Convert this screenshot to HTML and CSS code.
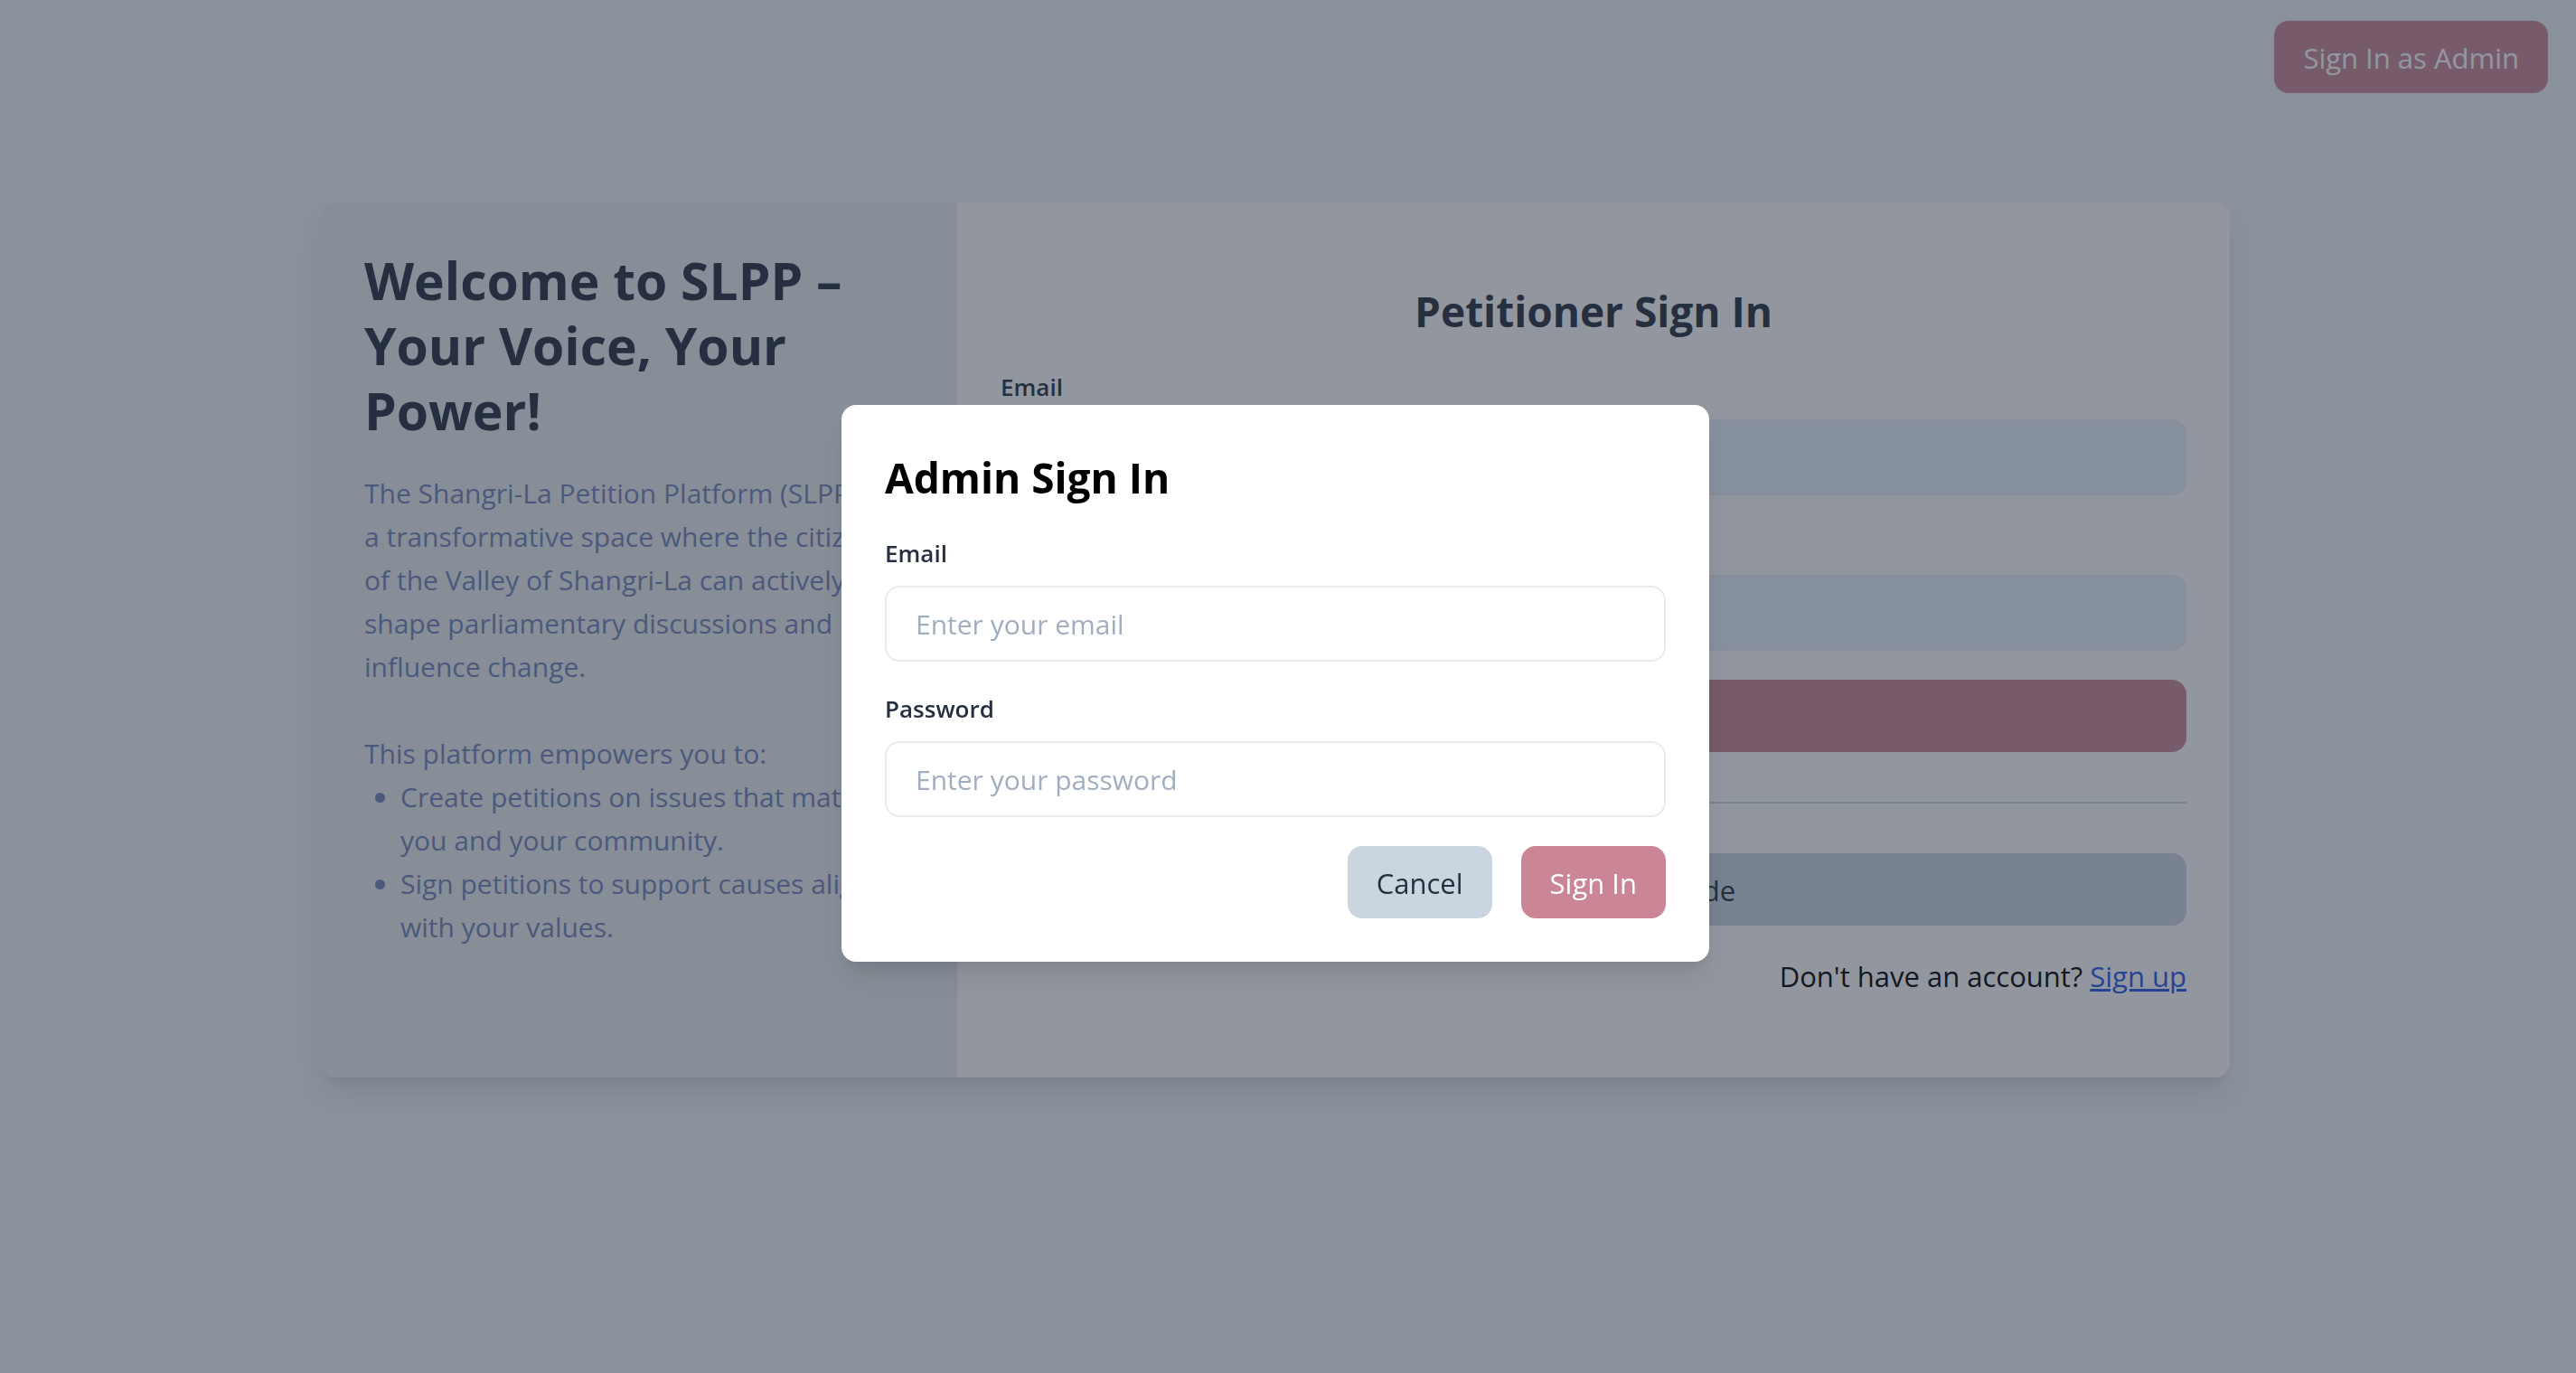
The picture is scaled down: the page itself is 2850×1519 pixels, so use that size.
FILE: index.html
```html
<!DOCTYPE html>
<html lang="en">
<head>
  <meta charset="utf-8">
  <meta name="viewport" content="width=device-width, initial-scale=1">
  <title>SLPP – Sign In</title>
  <link rel="stylesheet" href="styles.css">
</head>
<body>
  <header class="topbar">
    <button class="btn btn-primary" type="button">Sign In as Admin</button>
  </header>

  <main class="page">
    <div class="card">
      <section class="intro">
        <h1 class="intro-title">Welcome to SLPP – Your Voice, Your Power!</h1>
        <p class="intro-text">The Shangri-La Petition Platform (SLPP) is a transformative space where the citizens of the Valley of Shangri-La can actively shape parliamentary discussions and influence change.</p>
        <p class="intro-lead">This platform empowers you to:</p>
        <ul class="intro-list">
          <li>Create petitions on issues that matter to you and your community.</li>
          <li>Sign petitions to support causes aligned with your values.</li>
        </ul>
      </section>

      <section class="signin">
        <h2 class="form-title signin-title">Petitioner Sign In</h2>
        <form class="form">
          <div class="field">
            <label class="label" for="email">Email</label>
            <input class="input input-filled" id="email" type="email">
          </div>
          <div class="field">
            <label class="label" for="password">Password</label>
            <input class="input input-filled" id="password" type="password">
          </div>
          <button class="btn btn-primary" type="submit">Sign In</button>
        </form>
        <hr class="divider">
        <button class="btn btn-secondary" type="button">Sign Up with QR Code</button>
        <p class="signup">Don't have an account? <a class="link" href="#signup">Sign up</a></p>
      </section>
    </div>
  </main>

  <div class="overlay">
    <div class="modal" role="dialog" aria-modal="true" aria-labelledby="admin-title">
      <h2 class="form-title" id="admin-title">Admin Sign In</h2>
      <form class="form">
        <div class="field">
          <label class="label" for="admin-email">Email</label>
          <input class="input" id="admin-email" type="email" placeholder="Enter your email">
        </div>
        <div class="field">
          <label class="label" for="admin-password">Password</label>
          <input class="input" id="admin-password" type="password" placeholder="Enter your password">
        </div>
        <div class="actions">
          <button class="btn btn-secondary" type="button">Cancel</button>
          <button class="btn btn-primary" type="submit">Sign In</button>
        </div>
      </form>
    </div>
  </div>
</body>
</html>
```
FILE: styles.css
```css
*,
*::before,
*::after {
  box-sizing: border-box;
}

body,
h1,
h2,
p,
ul {
  margin: 0;
}

body {
  min-height: 100vh;
  background: #edf2f7;
  color: #000;
  font-family: "Segoe UI", "Open Sans", "Noto Sans", sans-serif;
  font-size: 30px;
  line-height: 48px;
}

button,
input {
  font: inherit;
}

.topbar {
  display: flex;
  justify-content: flex-end;
  padding: 23px 31px 0;
}

.page {
  display: flex;
  justify-content: center;
  padding: 121px 28px 48px 0;
}

.card {
  display: grid;
  grid-template-columns: 1fr 2fr;
  width: 100%;
  max-width: 2112px;
  border-radius: 16px;
  background: #fff;
  box-shadow: 0 20px 30px -6px rgba(0, 0, 0, 0.1), 0 8px 12px -4px rgba(0, 0, 0, 0.05);
  overflow: hidden;
}

.intro {
  padding: 50px 48px 46px;
  background: #e9ecef;
  color: #7083b8;
}

.intro-title {
  margin-bottom: 32px;
  color: #252f3f;
  font-size: 57px;
  font-weight: 700;
  line-height: 72px;
}

.intro-text {
  margin-bottom: 48px;
  padding-right: 16px;
}

.intro-list {
  padding-left: 40px;
}

.signin {
  display: flex;
  flex-direction: column;
  padding: 88px 48px;
}

.form-title {
  margin-bottom: 32px;
  font-size: 46px;
  font-weight: 700;
  line-height: 64px;
}

.signin-title {
  color: #252f3f;
  text-align: center;
}

.form {
  display: flex;
  flex-direction: column;
  gap: 32px;
}

.field {
  display: flex;
  flex-direction: column;
  gap: 16px;
}

.label {
  color: #252f3f;
  font-size: 26px;
  font-weight: 600;
  line-height: 40px;
}

.input {
  width: 100%;
  height: 84px;
  padding: 16px 32px;
  border: 2px solid #e9ecef;
  border-radius: 16px;
  background: #fff;
  color: #252f3f;
}

.input::placeholder {
  color: #a0aec0;
  opacity: 1;
}

.input-filled {
  background: #e8f0fe;
}

.btn {
  padding: 17px 32px 15px;
  border: 0;
  border-radius: 16px;
  font-size: 31px;
  cursor: pointer;
}

.btn-primary {
  background: #cb8696;
  color: #fff;
}

.btn-secondary {
  background: #cbd5e0;
  color: #252f3f;
}

.divider {
  width: 100%;
  margin: 55px 0;
  border: 0;
  border-top: 2px solid #cbd5e0;
}

.signup {
  margin-top: 32px;
  font-size: 31px;
  text-align: right;
}

.link {
  color: #2455eb;
  text-decoration-thickness: 3px;
}

.overlay {
  position: fixed;
  inset: 0;
  display: flex;
  align-items: center;
  justify-content: center;
  padding: 0 28px 7px 0;
  background: rgba(37, 47, 63, 0.5);
}

.modal {
  width: 100%;
  max-width: 960px;
  padding: 48px;
  border-radius: 16px;
  background: #fff;
  box-shadow: 0 20px 30px -6px rgba(0, 0, 0, 0.1), 0 8px 12px -4px rgba(0, 0, 0, 0.05);
}

.actions {
  display: flex;
  justify-content: flex-end;
  gap: 32px;
}
```
